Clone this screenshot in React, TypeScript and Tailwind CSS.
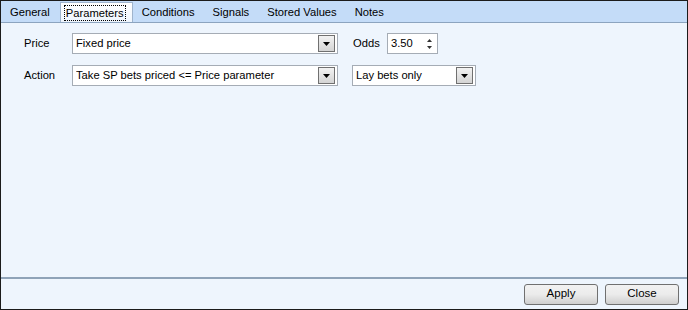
const tabs = ['General', 'Parameters', 'Conditions', 'Signals', 'Stored Values', 'Notes'];

function Combo({ value, width }: { value: string; width: string }) {
  return (
    <div className={`flex h-[21px] items-center border border-[#a5acb5] bg-white pl-[3px] pr-[2px] ${width}`}>
      <span className="flex-1 truncate">{value}</span>
      <div className="flex h-[17px] w-[17px] items-center justify-center border border-[#707070] bg-gradient-to-b from-[#f2f2f2] to-[#d4d4d4]">
        <svg width="7" height="4" viewBox="0 0 7 4">
          <path d="M0 0h7L3.5 4z" fill="#000" />
        </svg>
      </div>
    </div>
  );
}

function Button({ label }: { label: string }) {
  return (
    <button className="flex h-[21px] w-[74px] items-center justify-center rounded-[3px] border border-[#707070] bg-gradient-to-b from-[#f2f2f2] via-[#ebebeb] to-[#cfcfcf] text-[11.5px] text-black">
      {label}
    </button>
  );
}

export default function App() {
  return (
    <div className="flex h-[310px] w-[688px] flex-col border border-[#1b1b1b] bg-[#eef5fd] font-['Liberation_Sans',Arial,sans-serif] text-[11.2px] text-black">
      {/* Tab strip */}
      <div className="flex h-[21px] items-end bg-[#c4dcf8]">
        {tabs.map((t) => {
          const active = t === 'Parameters';
          return active ? (
            <div key={t} className="ml-[1px] flex h-[20px] items-center border-x border-t border-[#9fb4cc] bg-gradient-to-b from-[#ffffff] to-[#eef5fd] pl-[3px] pr-[6px]">
              <span className="border border-dotted border-black px-[1px] leading-[14px]">{t}</span>
            </div>
          ) : (
            <div key={t} className="flex h-[20px] items-center px-[8px]">
              <span className="px-[1px]">{t}</span>
            </div>
          );
        })}
      </div>

      {/* Content */}
      <div className="flex flex-1 flex-col gap-[11px] border-t border-[#8ca4bf] pl-[23px] pt-[10px]">
        <div className="flex items-center">
          <span className="w-[48px]">Price</span>
          <Combo value="Fixed price" width="w-[266px]" />
          <span className="ml-[15px] w-[34px]">Odds</span>
          <div className="flex h-[21px] w-[51px] items-center border border-[#a5acb5] bg-white pl-[3px] pr-[5px]">
            <span className="flex-1">3.50</span>
            <div className="flex flex-col items-center gap-[4px]">
              <svg width="5" height="3" viewBox="0 0 5 3"><path d="M0 3h5L2.5 0z" fill="#333" /></svg>
              <svg width="5" height="3" viewBox="0 0 5 3"><path d="M0 0h5L2.5 3z" fill="#333" /></svg>
            </div>
          </div>
        </div>
        <div className="flex items-center">
          <span className="w-[48px]">Action</span>
          <Combo value="Take SP bets priced <= Price parameter" width="w-[266px]" />
          <div className="ml-[14px]">
            <Combo value="Lay bets only" width="w-[124px]" />
          </div>
        </div>
      </div>

      {/* Footer */}
      <div className="flex h-[32px] items-center justify-end gap-[7px] border-t-2 border-[#8fa3b8] pr-[8px]">
        <Button label="Apply" />
        <Button label="Close" />
      </div>
    </div>
  );
}
